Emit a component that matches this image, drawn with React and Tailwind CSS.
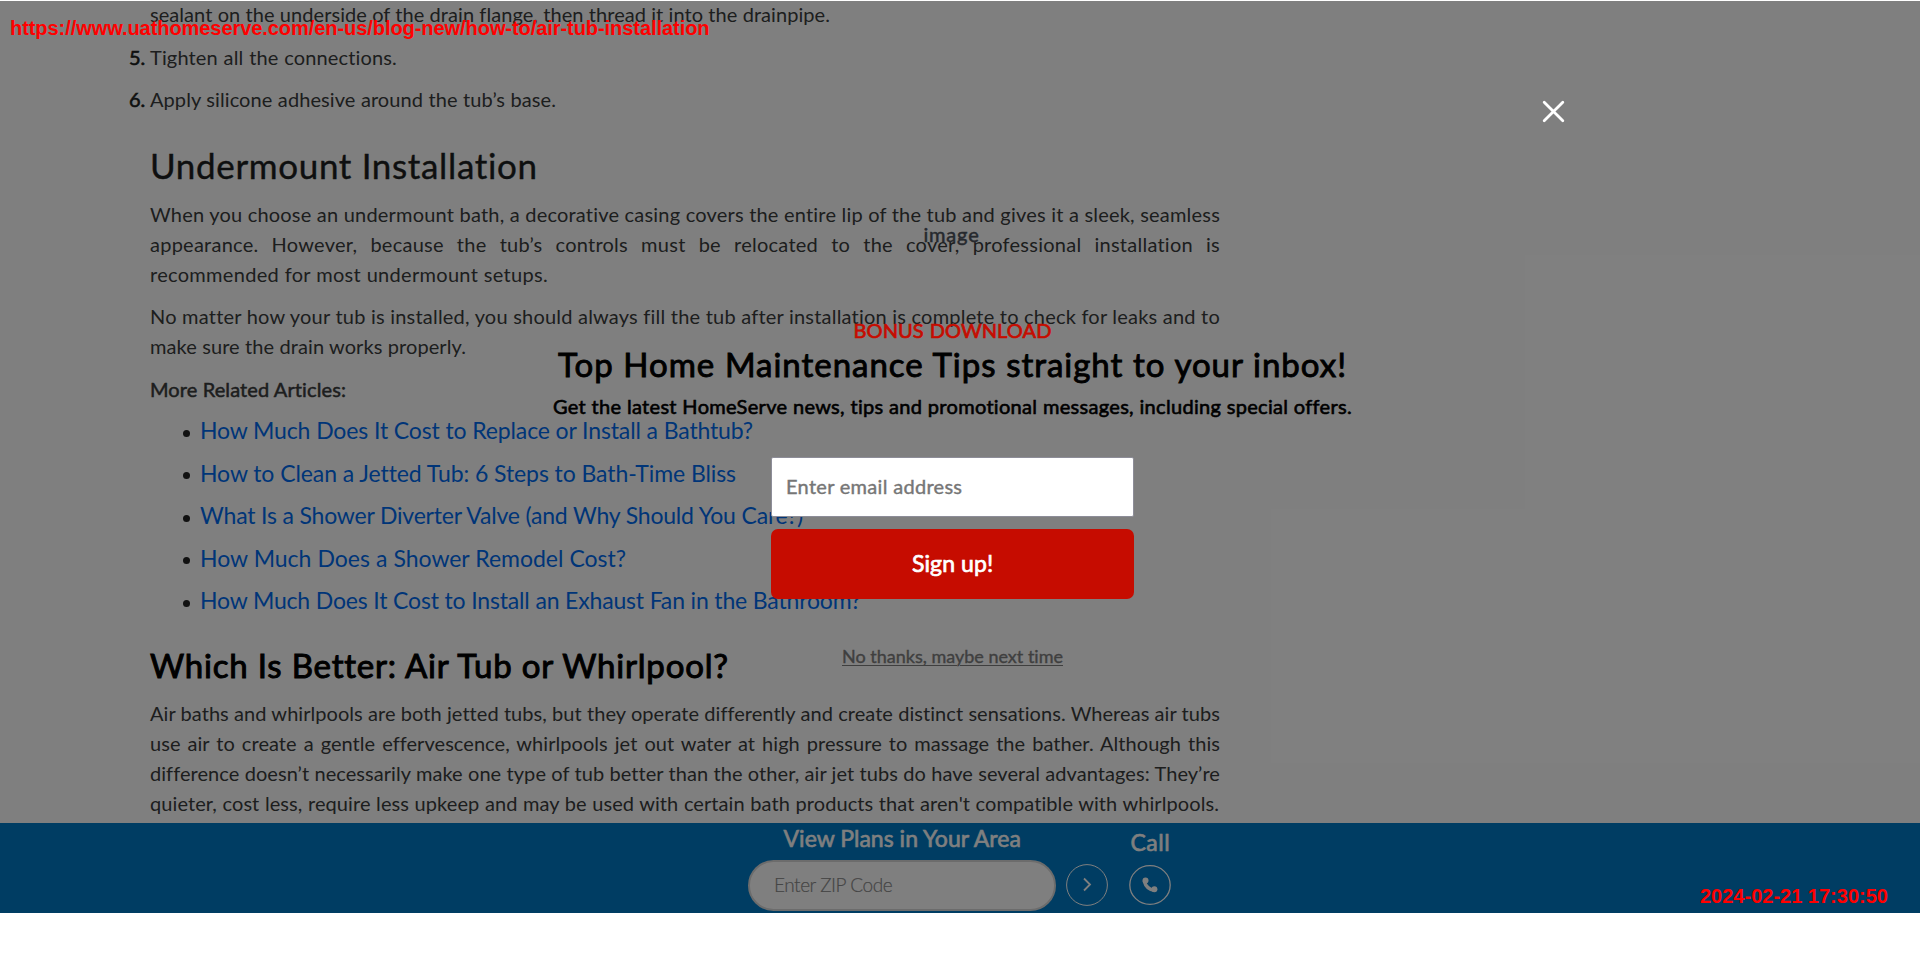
const line = "whitespace-nowrap [text-align-last:justify] [font-variant-ligatures:none]";

const steps = [
  { n: "", text: "sealant on the underside of the drain flange, then thread it into the drainpipe.", cls: "w-[680px] tracking-[0.06px]" },
  { n: "5.", text: "Tighten all the connections.", cls: "w-[247px] tracking-[0.15px]" },
  { n: "6.", text: "Apply silicone adhesive around the tub’s base.", cls: "w-[406px] tracking-[0.08px]" },
];

const links = [
  { text: "How Much Does It Cost to Replace or Install a Bathtub?", cls: "w-[553px] tracking-[-0.14px]" },
  { text: "How to Clean a Jetted Tub: 6 Steps to Bath-Time Bliss", cls: "w-[536px] tracking-[-0.08px]" },
  { text: "What Is a Shower Diverter Valve (and Why Should You Care?)", cls: "w-[603px] tracking-[-0.2px]" },
  { text: "How Much Does a Shower Remodel Cost?", cls: "w-[426px] tracking-[-0.03px]" },
  { text: "How Much Does It Cost to Install an Exhaust Fan in the Bathroom?", cls: "w-[661px] tracking-[-0.17px]" },
];

function Line({ children, cls = "w-[1070px]" }) {
  return <div className={`${line} ${cls}`}>{children}</div>;
}

function Article() {
  return (
    <article className="-mt-0.5 pl-[150px] text-[20px] leading-[30px] text-[#3a3c3d]">
      <ol className="flex flex-col gap-[12.5px]">
        {steps.map((s) => (
          <li key={s.text} className="-ml-[21px] flex">
            <span className="w-[21px] shrink-0 text-[#1c1e20] [-webkit-text-stroke:0.6px_#1c1e20]">{s.n}</span>
            <Line cls={s.cls}>{s.text}</Line>
          </li>
        ))}
      </ol>
      <h3 className={`${line} mt-[30px] w-[387px] text-[35px] leading-[42px] tracking-[0.65px] text-[#1c1e20] [-webkit-text-stroke:0.4px_#1c1e20]`}>
        Undermount Installation
      </h3>
      <div className="mt-[13px]">
        <Line cls="w-[1070px] tracking-[0.2px]">When you choose an undermount bath, a decorative casing covers the entire lip of the tub and gives it a sleek, seamless</Line>
        <Line cls="w-[1070px] tracking-[0.25px]">appearance. However, because the tub’s controls must be relocated to the cover, professional installation is</Line>
        <Line cls="w-[398px] tracking-[0.3px]">recommended for most undermount setups.</Line>
      </div>
      <div className="mt-3">
        <Line cls="w-[1070px] tracking-[0.2px]">No matter how your tub is installed, you should always fill the tub after installation is complete to check for leaks and to</Line>
        <Line cls="w-[316px] tracking-[0.08px]">make sure the drain works properly.</Line>
      </div>
      <p className={`${line} mt-[13px] w-[196px] tracking-[0.1px] [-webkit-text-stroke:0.5px_#3a3c3d]`}>More Related Articles:</p>
      <ul className="mt-[11px] flex flex-col gap-[12.5px] text-[23px] text-[#006bf0]">
        {links.map((l) => (
          <li key={l.text} className="ml-8 flex items-center">
            <span className="mt-1.5 mr-2.5 ml-px size-[7px] rounded-full bg-[#222]" />
            <a className={`${line} ${l.cls}`}>{l.text}</a>
          </li>
        ))}
      </ul>
      <h2 className={`${line} mt-[29px] w-[577px] text-[33px] leading-[42px] tracking-[0.8px] text-black [-webkit-text-stroke:1px_#000]`}>
        Which Is Better: Air Tub or Whirlpool?
      </h2>
      <div className="mt-3">
        <Line cls="w-[1070px] tracking-[0.05px]">Air baths and whirlpools are both jetted tubs, but they operate differently and create distinct sensations. Whereas air tubs</Line>
        <Line cls="w-[1070px] tracking-[0.05px]">use air to create a gentle effervescence, whirlpools jet out water at high pressure to massage the bather. Although this</Line>
        <Line cls="w-[1070px] tracking-[0.06px]">difference doesn’t necessarily make one type of tub better than the other, air jet tubs do have several advantages: They’re</Line>
        <Line cls="w-[1069px] tracking-[0.08px]">quieter, cost less, require less upkeep and may be used with certain bath products that aren't compatible with whirlpools.</Line>
      </div>
    </article>
  );
}

function PlansBar() {
  return (
    <footer className="flex h-[90px] gap-2.5 bg-[#007ac6] pl-[748px] text-white">
      <div className="flex w-[308px] flex-col items-center">
        <div className={`${line} mt-px w-[237px] text-[23px] leading-7 tracking-[0.02px] [-webkit-text-stroke:0.6px_#fff]`}>View Plans in Your Area</div>
        <div className="mt-2 flex h-[51px] w-full items-center rounded-full border-2 border-[#d8d8d8] bg-white pl-6 text-[19px] font-light text-[#8a8a8a]">
          <span className={`${line} w-[117px] tracking-[-0.45px] [-webkit-text-stroke:0.2px_#8a8a8a]`}>Enter ZIP Code</span>
        </div>
      </div>
      <svg className="mt-[41px] size-[42px]" viewBox="0 0 42 42" fill="none" stroke="#fff">
        <circle cx="21" cy="21" r="20.4" strokeWidth="1" />
        <path d="M18 14.500l6 6-6 6" strokeWidth="1.8" />
      </svg>
      <div className="ml-[11px] flex flex-col items-center">
        <div className={`${line} mt-[5px] w-[39px] text-[23px] leading-7 tracking-[0.5px] [-webkit-text-stroke:0.6px_#fff]`}>Call</div>
        <svg className="mt-[9px] h-[40px] w-[42px]" viewBox="0 0 42 40" fill="none">
          <ellipse cx="21" cy="20" rx="20.2" ry="19.3" stroke="#fff" strokeWidth="1.3" />
          <path d="M15.200 16c1.300 5 5 8.500 10 9.300" stroke="#fff" strokeWidth="3.400" />
          <circle cx="16.500" cy="15.600" r="3" fill="#fff" />
          <circle cx="25.400" cy="24.200" r="3" fill="#fff" />
        </svg>
      </div>
    </footer>
  );
}

function SignupModal() {
  return (
    <div className="absolute inset-x-0 top-px flex h-[912px] flex-col items-center bg-black/50 pr-[15px] text-black">
      <svg className="absolute left-[1542px] top-[99px] size-[23px]" viewBox="0 0 23 23" stroke="#fff" strokeWidth="2.8" strokeLinecap="round">
        <path d="M2.200 2.200l18.600 18.600M20.800 2.200L2.200 20.800" />
      </svg>
      <div className="mt-[221px] ml-[-2px] w-[56px] whitespace-nowrap text-[20px] leading-6 tracking-[0.8px] text-[#26292e] [-webkit-text-stroke:0.5px_#26292e]">image</div>
      <div className={`${line} mt-[72px] w-[198px] text-[20px] leading-6 tracking-[0.1px] text-[#c60c00] [-webkit-text-stroke:0.7px_#c60c00]`}>BONUS DOWNLOAD</div>
      <div className={`${line} mt-px w-[789px] text-[33px] leading-[42px] tracking-[0.98px] [-webkit-text-stroke:0.9px_#000]`}>Top Home Maintenance Tips straight to your inbox!</div>
      <div className={`${line} mt-[9px] w-[799px] text-[20px] leading-6 tracking-[0.31px] [-webkit-text-stroke:0.6px_#000]`}>Get the latest HomeServe news, tips and promotional messages, including special offers.</div>
      <div className="mt-[39px] flex h-[60px] w-[363px] items-center rounded-[2px] border border-[#8d8d98] bg-white pb-0.5 pl-3.5 text-[20px] text-[#767676]">
        <span className={`${line} w-[176px] tracking-[0.3px] [-webkit-text-stroke:0.4px_#767676]`}>Enter email address</span>
      </div>
      <button className="mt-3 flex h-[70px] w-[363px] items-center justify-center rounded-[7px] bg-[#c60c00] pb-px text-[23px] text-white">
        <span className={`${line} w-[81px] tracking-[0.1px] [-webkit-text-stroke:0.7px_#fff]`}>Sign up!</span>
      </button>
      <a className="mt-[45px] flex h-6 w-[221px] text-[18px] leading-6 text-[#3f3f3f] underline decoration-1 underline-offset-2 [-webkit-text-stroke:0.4px_#3f3f3f]">
        <span className={`${line} w-[221px]`}>No thanks, maybe next time</span>
      </a>
    </div>
  );
}

export default function App() {
  return (
    <div className="relative h-[963px] w-full overflow-hidden bg-white pt-px font-['Lato',sans-serif]">
      <main className="h-[822px] overflow-hidden">
        <Article />
      </main>
      <PlansBar />
      <SignupModal />
      <div className="absolute left-[10px] top-[16px] whitespace-nowrap font-['Liberation_Sans',sans-serif] text-[20px] font-bold leading-[24px] tracking-[-0.06px] text-[#ff0000]">
        https://www.uathomeserve.com/en-us/blog-new/how-to/air-tub-installation
      </div>
      <div className="absolute left-[1700px] top-[884px] whitespace-nowrap font-['Liberation_Sans',sans-serif] text-[20px] font-bold leading-[24px] text-[#ff0000]">
        2024-02-21 17:30:50
      </div>
    </div>
  );
}
